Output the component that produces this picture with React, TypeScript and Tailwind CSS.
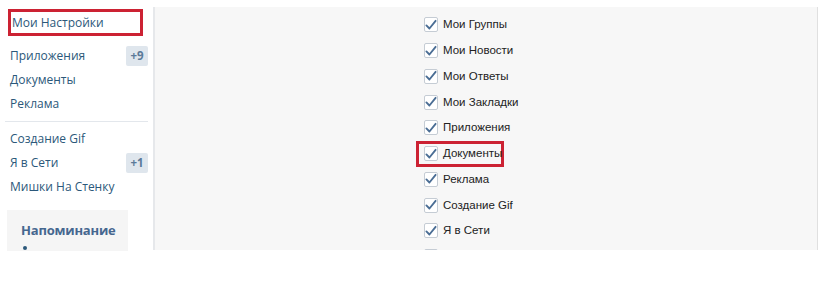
import React from "react";

const font = { fontFamily: '"Open Sans", "Liberation Sans", sans-serif' };

type NavItem = { label: string; badge?: string };

const groupOne: NavItem[] = [
  { label: "Приложения", badge: "+9" },
  { label: "Документы" },
  { label: "Реклама" },
];

const groupTwo: NavItem[] = [
  { label: "Создание Gif" },
  { label: "Я в Сети", badge: "+1" },
  { label: "Мишки На Стенку" },
];

const options = [
  "Мои Группы",
  "Мои Новости",
  "Мои Ответы",
  "Мои Закладки",
  "Приложения",
  "Документы",
  "Реклама",
  "Создание Gif",
  "Я в Сети",
];

function Check() {
  return (
    <span className="w-[14px] h-[15px] border border-[#c5ccd4] bg-white rounded-[2px] flex items-center justify-center shrink-0">
      <svg width="12" height="12" viewBox="0 0 13 12" fill="none">
        <path d="M1.5 6.5 L4.8 9.8 L11.5 1.5" stroke="#4a6d94" strokeWidth="2" strokeLinecap="round" strokeLinejoin="round" />
      </svg>
    </span>
  );
}

function NavRow({ item }: { item: NavItem }) {
  return (
    <div className="h-6 flex items-center justify-between pl-[10px] pr-[5px] text-[12px] text-[#2b587a]">
      <span>{item.label}</span>
      {item.badge && (
        <span className="w-[22px] h-[20px] rounded-[2px] bg-[#dfe6ed] text-[#5b7a99] font-bold text-[11.5px] flex items-center justify-center">
          {item.badge}
        </span>
      )}
    </div>
  );
}

export default function App() {
  return (
    <div className="w-[818px] h-[281px] bg-white overflow-hidden flex" style={font}>
      {/* Sidebar */}
      <div className="w-[153px] shrink-0 pt-[9px]">
        <div className="ml-[8px] w-[135px] h-[27px] border-[3px] border-[#cc2233] flex items-center pl-[1px] text-[12px] text-[#2b587a]">
          Мои Настройки
        </div>
        <div className="mt-[8px]">
          {groupOne.map((item) => (
            <NavRow key={item.label} item={item} />
          ))}
        </div>
        <div className="mx-[5px] my-[5px] border-t border-[#e3e7ec]" />
        <div>
          {groupTwo.map((item) => (
            <NavRow key={item.label} item={item} />
          ))}
        </div>
        <div className="ml-[7px] mt-[11px] w-[121px] h-[41px] bg-[#f5f5f5] pl-[14px] pt-[12px] overflow-hidden">
          <div className="text-[13px] font-bold text-[#45678f] leading-[16px] tracking-[-0.2px]">Напоминание</div>
          <div className="mt-[8px] ml-[2px] w-[4px] h-[4px] rounded-full bg-[#2b587a]" />
        </div>
      </div>

      {/* Settings panel */}
      <div className="flex-1 mt-[7px] h-[243px] bg-[#f7f7f7] border-l-2 border-[#e6e8eb] border-r border-r-[#e0e0e0] overflow-hidden">
        <div className="pl-[269px] pt-[5px]">
          {options.map((label, i) => (
            <div key={label} className="h-[25.75px] flex items-center">
              <div
                className={
                  i === 5
                    ? "flex items-center gap-[5px] -ml-[8px] pl-[5px] h-[26px] w-[88px] border-[3px] border-[#cc2233]"
                    : "flex items-center gap-[5px]"
                }
              >
                <Check />
                <span className="text-[11.5px] text-[#222] font-['Liberation_Sans',sans-serif]">{label}</span>
              </div>
            </div>
          ))}
          <div className="h-[25.75px] flex items-center">
            <Check />
          </div>
        </div>
      </div>
    </div>
  );
}
